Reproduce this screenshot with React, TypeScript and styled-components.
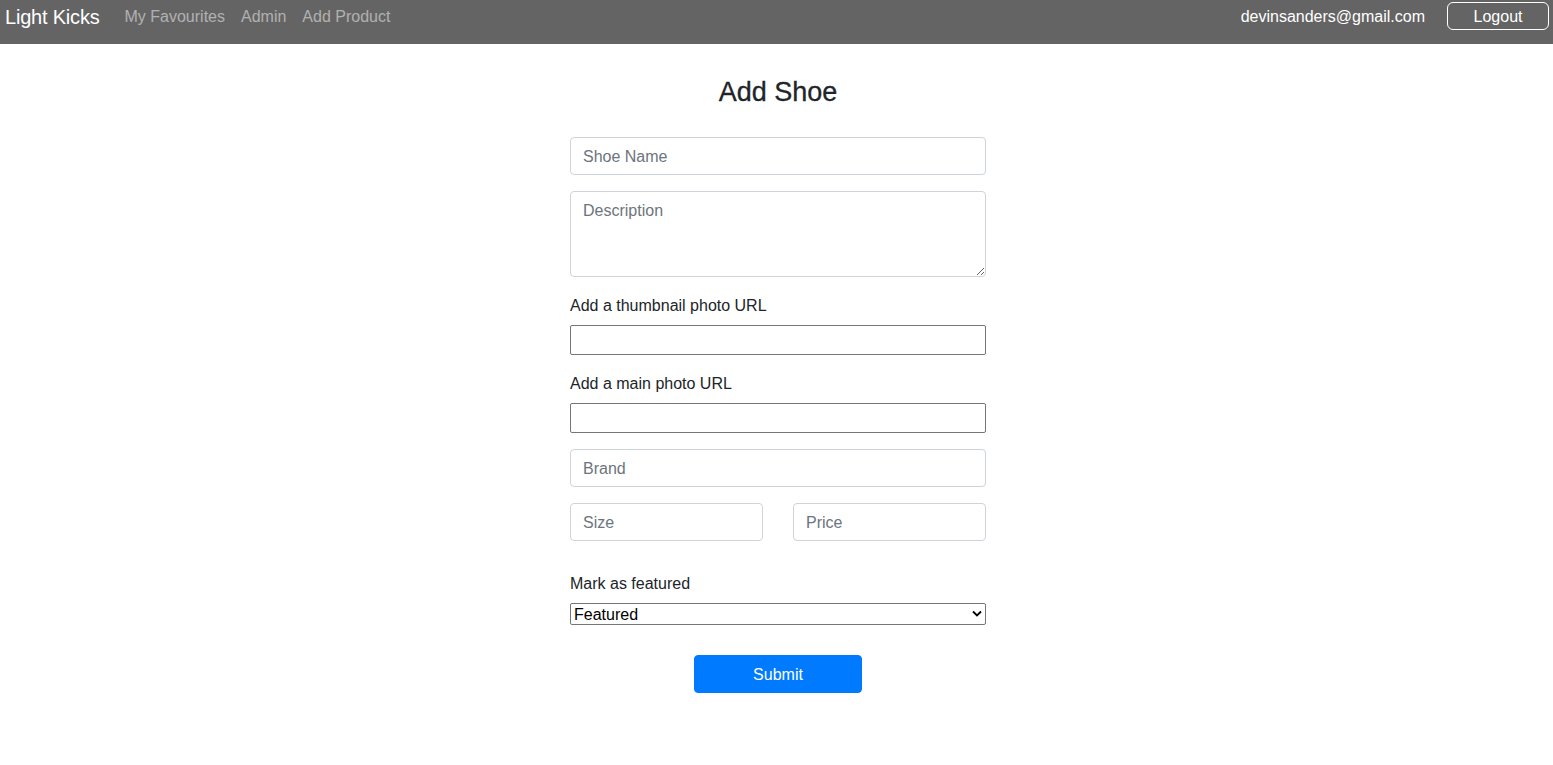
import React from "react";
import styled, { createGlobalStyle } from "styled-components";

const Global = createGlobalStyle`
  * { box-sizing: border-box; }
  html, body { margin: 0; padding: 0; background: #fff; }
  body {
    font-family: "Liberation Sans", Arial, Helvetica, sans-serif;
    font-size: 16px;
    line-height: 1.5;
    color: #212529;
  }
`;

const NavBar = styled.nav`
  height: 44px;
  background: #646464;
  display: flex;
  align-items: flex-start;
  justify-content: space-between;
  padding: 2px 4px 0 5px;
`;

const NavLeft = styled.div`
  display: flex;
  align-items: center;
  height: 28px;
  padding-top: 2px;
`;

const Brand = styled.a`
  font-size: 20px;
  color: #fff;
  text-decoration: none;
  margin-right: 17px;
  letter-spacing: -0.2px;
`;

const NavLink = styled.a`
  font-size: 16px;
  color: rgba(255, 255, 255, 0.5);
  text-decoration: none;
  padding: 0 8px;
`;

const NavRight = styled.div`
  display: flex;
  align-items: center;
  height: 28px;
  gap: 22px;
`;

const Email = styled.span`
  color: #fff;
  font-size: 16px;
  padding-top: 2px;
`;

const OutlineButton = styled.button`
  width: 102px;
  height: 28px;
  border: 1px solid #fff;
  border-radius: 6px;
  background: transparent;
  color: #fff;
  font-family: inherit;
  font-size: 16px;
  padding: 2px 0 0;
`;

const Main = styled.main`
  display: flex;
  flex-direction: column;
  align-items: center;
  padding: 31px 0 0 3px;
`;

const Title = styled.h2`
  margin: 0 0 28px;
  font-size: 27px;
  line-height: 34px;
  font-weight: 400;
  color: #212529;
  -webkit-text-stroke: 0.3px #212529;
`;

const Form = styled.form`
  width: 416px;
  display: flex;
  flex-direction: column;
`;

const Group = styled.div<{ $mb?: number }>`
  margin-bottom: ${(p) => (p.$mb ?? 16)}px;
  display: flex;
  flex-direction: column;
`;

const controlStyles = `
  width: 100%;
  height: 38px;
  padding: 7px 12px 5px;
  font-family: inherit;
  font-size: 16px;
  line-height: 24px;
  color: #495057;
  background: #fff;
  border: 1px solid #ced4da;
  border-radius: 4px;
  outline: none;
  &::placeholder { color: #6c757d; }
`;

const Control = styled.input`
  ${controlStyles}
`;

const TextArea = styled.textarea`
  ${controlStyles}
  height: 86px;
  resize: vertical;
  display: block;
`;

const Label = styled.label`
  display: block;
  font-size: 16px;
  line-height: 24px;
  margin-bottom: 8px;
  padding-top: 1px;
  height: 24px;
  color: #212529;
`;

const PlainInput = styled.input`
  width: 100%;
  height: 30px;
  border: 1px solid #767676;
  border-radius: 2px;
  padding: 1px 2px;
  font-family: inherit;
  font-size: 16px;
  outline: none;
  background: #fff;
`;

const Row = styled.div`
  display: grid;
  grid-template-columns: 1fr 1fr;
  column-gap: 30px;
  margin-bottom: 30px;
`;

const SelectWrap = styled.div`
  position: relative;
  width: 100%;
`;

const Select = styled.select`
  display: block;
  width: 100%;
  height: 22px;
  appearance: none;
  -webkit-appearance: none;
  border: 1px solid #767676;
  border-radius: 2px;
  background: #fff;
  color: #000;
  font-family: "Liberation Sans", Arial, sans-serif;
  font-size: 16px;
  line-height: 20px;
  padding: 1px 20px 0 3px;
  outline: none;
`;

const Chevron = styled.svg`
  position: absolute;
  right: 4px;
  top: 7px;
  pointer-events: none;
`;

const SubmitRow = styled.div`
  display: flex;
  justify-content: center;
  margin-top: 30px;
`;

const SubmitButton = styled.button`
  width: 168px;
  height: 38px;
  border: 1px solid #007bff;
  border-radius: 4px;
  background: #007bff;
  color: #fff;
  font-family: inherit;
  font-size: 16px;
  padding: 2px 0 0;
`;

export default function App() {
  return (
    <>
      <Global />
      <NavBar>
        <NavLeft>
          <Brand href="#">Light Kicks</Brand>
          <NavLink href="#">My Favourites</NavLink>
          <NavLink href="#">Admin</NavLink>
          <NavLink href="#">Add Product</NavLink>
        </NavLeft>
        <NavRight>
          <Email>devinsanders@gmail.com</Email>
          <OutlineButton type="button">Logout</OutlineButton>
        </NavRight>
      </NavBar>
      <Main>
        <Title>Add Shoe</Title>
        <Form onSubmit={(e) => e.preventDefault()}>
          <Group>
            <Control placeholder="Shoe Name" />
          </Group>
          <Group>
            <TextArea placeholder="Description" rows={3} />
          </Group>
          <Group>
            <Label>Add a thumbnail photo URL</Label>
            <PlainInput />
          </Group>
          <Group>
            <Label>Add a main photo URL</Label>
            <PlainInput />
          </Group>
          <Group>
            <Control placeholder="Brand" />
          </Group>
          <Row>
            <Control placeholder="Size" />
            <Control placeholder="Price" />
          </Row>
          <Group $mb={0}>
            <Label>Mark as featured</Label>
            <SelectWrap>
              <Select defaultValue="featured">
                <option value="featured">Featured</option>
                <option value="not">Not Featured</option>
              </Select>
              <Chevron width="10" height="7" viewBox="0 0 10 7">
                <path d="M1 1.5 L5 5.5 L9 1.5" fill="none" stroke="#000" strokeWidth="1.8" />
              </Chevron>
            </SelectWrap>
          </Group>
          <SubmitRow>
            <SubmitButton type="submit">Submit</SubmitButton>
          </SubmitRow>
        </Form>
      </Main>
    </>
  );
}
